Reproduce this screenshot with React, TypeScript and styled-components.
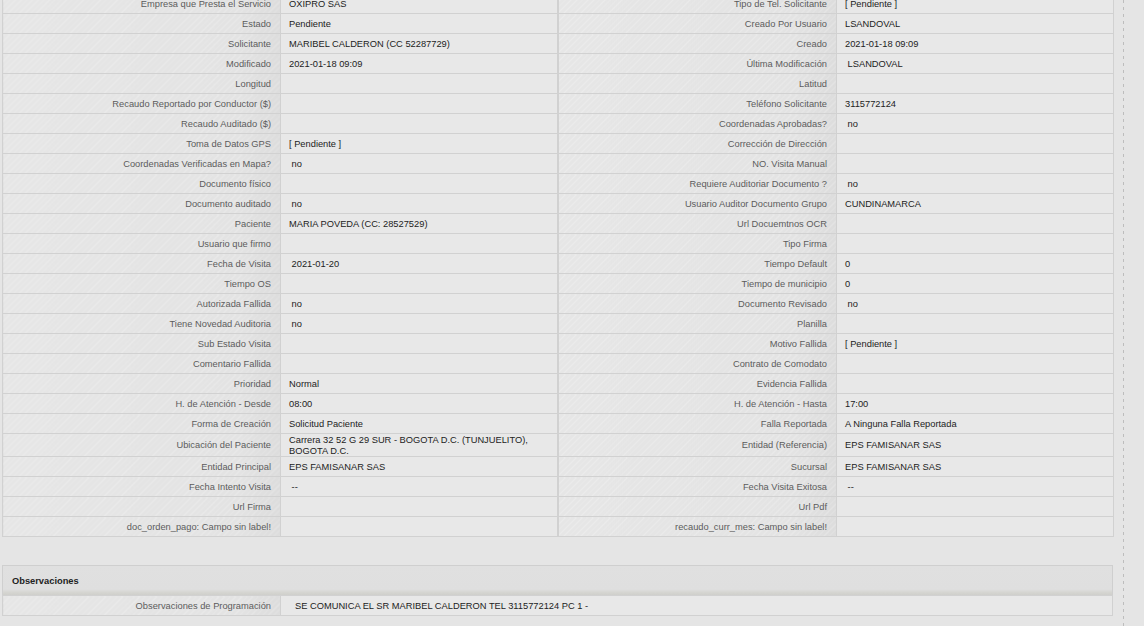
import styled, { createGlobalStyle } from 'styled-components';

type Row = [string, string, string, string];

const NB = '\u00a0';

// filas del detalle de la visita (etiqueta, valor, etiqueta, valor)
const ROWS: Row[] = [
    ['Empresa que Presta el Servicio', 'OXIPRO SAS', 'Tipo de Tel. Solicitante', '[ Pendiente ]'],
    ['Estado', 'Pendiente', 'Creado Por Usuario', 'LSANDOVAL'],
    ['Solicitante', 'MARIBEL CALDERON (CC 52287729)', 'Creado', '2021-01-18 09:09'],
    ['Modificado', '2021-01-18 09:09', 'Última Modificación', NB + 'LSANDOVAL'],
    ['Longitud', '', 'Latitud', ''],
    ['Recaudo Reportado por Conductor ($)', '', 'Teléfono Solicitante', '3115772124'],
    ['Recaudo Auditado ($)', '', 'Coordenadas Aprobadas?', NB + 'no'],
    ['Toma de Datos GPS', '[ Pendiente ]', 'Corrección de Dirección', ''],
    ['Coordenadas Verificadas en Mapa?', NB + 'no', 'NO. Visita Manual', ''],
    ['Documento físico', '', 'Requiere Auditoriar Documento ?', NB + 'no'],
    ['Documento auditado', NB + 'no', 'Usuario Auditor Documento Grupo', 'CUNDINAMARCA'],
    ['Paciente', 'MARIA POVEDA (CC: 28527529)', 'Url Docuemtnos OCR', ''],
    ['Usuario que firmo', '', 'Tipo Firma', ''],
    ['Fecha de Visita', NB + '2021-01-20', 'Tiempo Default', '0'],
    ['Tiempo OS', '', 'Tiempo de municipio', '0'],
    ['Autorizada Fallida', NB + 'no', 'Documento Revisado', NB + 'no'],
    ['Tiene Novedad Auditoria', NB + 'no', 'Planilla', ''],
    ['Sub Estado Visita', '', 'Motivo Fallida', '[ Pendiente ]'],
    ['Comentario Fallida', '', 'Contrato de Comodato', ''],
    ['Prioridad', 'Normal', 'Evidencia Fallida', ''],
    ['H. de Atención - Desde', '08:00', 'H. de Atención - Hasta', '17:00'],
    ['Forma de Creación', 'Solicitud Paciente', 'Falla Reportada', 'A Ninguna Falla Reportada'],
    [
        'Ubicación del Paciente',
        'Carrera 32 52 G 29 SUR - BOGOTA D.C. (TUNJUELITO), BOGOTA D.C.',
        'Entidad (Referencia)',
        'EPS FAMISANAR SAS',
    ],
    ['Entidad Principal', 'EPS FAMISANAR SAS', 'Sucursal', 'EPS FAMISANAR SAS'],
    ['Fecha Intento Visita', NB + '--', 'Fecha Visita Exitosa', NB + '--'],
    ['Url Firma', '', 'Url Pdf', ''],
    ['doc_orden_pago: Campo sin label!', '', 'recaudo_curr_mes: Campo sin label!', ''],
];

const App = () => {
    return (
        <>
            <GlobalStyle />
            <Page>
                <Main>
                    <Sheet>
                        <colgroup>
                            <Col $w={278} />
                            <Col $w={277} />
                            <Col $w={279} />
                            <Col $w={277} />
                        </colgroup>
                        <tbody>
                            {ROWS.map((row) => (
                                <tr key={row[0]}>
                                    <LabelCell>{row[0]}</LabelCell>
                                    <ValueCell>{row[1]}</ValueCell>
                                    <LabelCell $divider>{row[2]}</LabelCell>
                                    <ValueCell>{row[3]}</ValueCell>
                                </tr>
                            ))}
                        </tbody>
                    </Sheet>

                    <Panel>
                        <PanelHead>Observaciones</PanelHead>
                        <Sheet>
                            <colgroup>
                                <Col $w={278} />
                                <Col />
                            </colgroup>
                            <tbody>
                                <tr>
                                    <LabelCell>Observaciones de Programación</LabelCell>
                                    <ValueCell $indent={14}>
                                        SE COMUNICA EL SR MARIBEL CALDERON TEL 3115772124 PC 1 -
                                    </ValueCell>
                                </tr>
                            </tbody>
                        </Sheet>
                    </Panel>
                </Main>
                <Rail />
            </Page>
        </>
    );
};

const GlobalStyle = createGlobalStyle`
    html, body {
        margin: 0;
        padding: 0;
        height: 100%;
        overflow: hidden;
        background: #e5e5e5;
    }
    body {
        font-family: 'Liberation Sans', Arial, sans-serif;
        font-size: 9.3px;
    }
`;

const Page = styled.div`
    display: flex;
    height: 626px;
`;

const Main = styled.div`
    width: 1111px;
    padding-left: 2px;
    /* la página está desplazada unos píxeles hacia abajo */
    margin-top: -7px;
`;

const Sheet = styled.table`
    width: 100%;
    table-layout: fixed;
    border-collapse: collapse;
    border-spacing: 0;
`;

const Col = styled.col<{ $w?: number }>`
    width: ${(p) => (p.$w ? `${p.$w}px` : 'auto')};
`;

const LabelCell = styled.td<{ $divider?: boolean }>`
    height: 18px;
    padding: 1px 9px 0 4px;
    text-align: right;
    vertical-align: middle;
    line-height: 10.5px;
    color: #5c5c5c;
    border: 1px solid #d1d1d1;
    ${(p) => (p.$divider ? 'border-left: 2px solid #d1d1d1;' : '')}
    background:
        repeating-linear-gradient(
            135deg,
            rgba(255, 255, 255, 0.18) 0 1px,
            rgba(255, 255, 255, 0) 1px 4px
        ),
        linear-gradient(to right, #e6e6e6 0%, #e3e3e3 85%, #dcdcdc 100%);
    white-space: nowrap;
    overflow: hidden;
`;

const ValueCell = styled.td<{ $indent?: number }>`
    height: 18px;
    padding: 1px 20px 0 ${(p) => p.$indent ?? 8}px;
    vertical-align: middle;
    line-height: 10.5px;
    color: #222;
    background: #e8e8e8;
    border: 1px solid #d1d1d1;
`;

const Panel = styled.section`
    margin-top: 28px;
`;

const PanelHead = styled.div`
    height: 30px;
    display: flex;
    align-items: center;
    padding: 0 9px;
    font-weight: bold;
    color: #222;
    border: 1px solid #cfcfcf;
    border-bottom: none;
    background: linear-gradient(to bottom, #e0e0e0 0%, #dfdfdf 80%, #d6d6d2 90%, #cfcfcb 100%);
    box-sizing: border-box;
`;

const Rail = styled.div`
    width: 1px;
    margin-left: 10px;
    height: 100%;
    background: repeating-linear-gradient(to bottom, #bdbdbd 0 3px, transparent 3px 7px);
`;

export default App;
